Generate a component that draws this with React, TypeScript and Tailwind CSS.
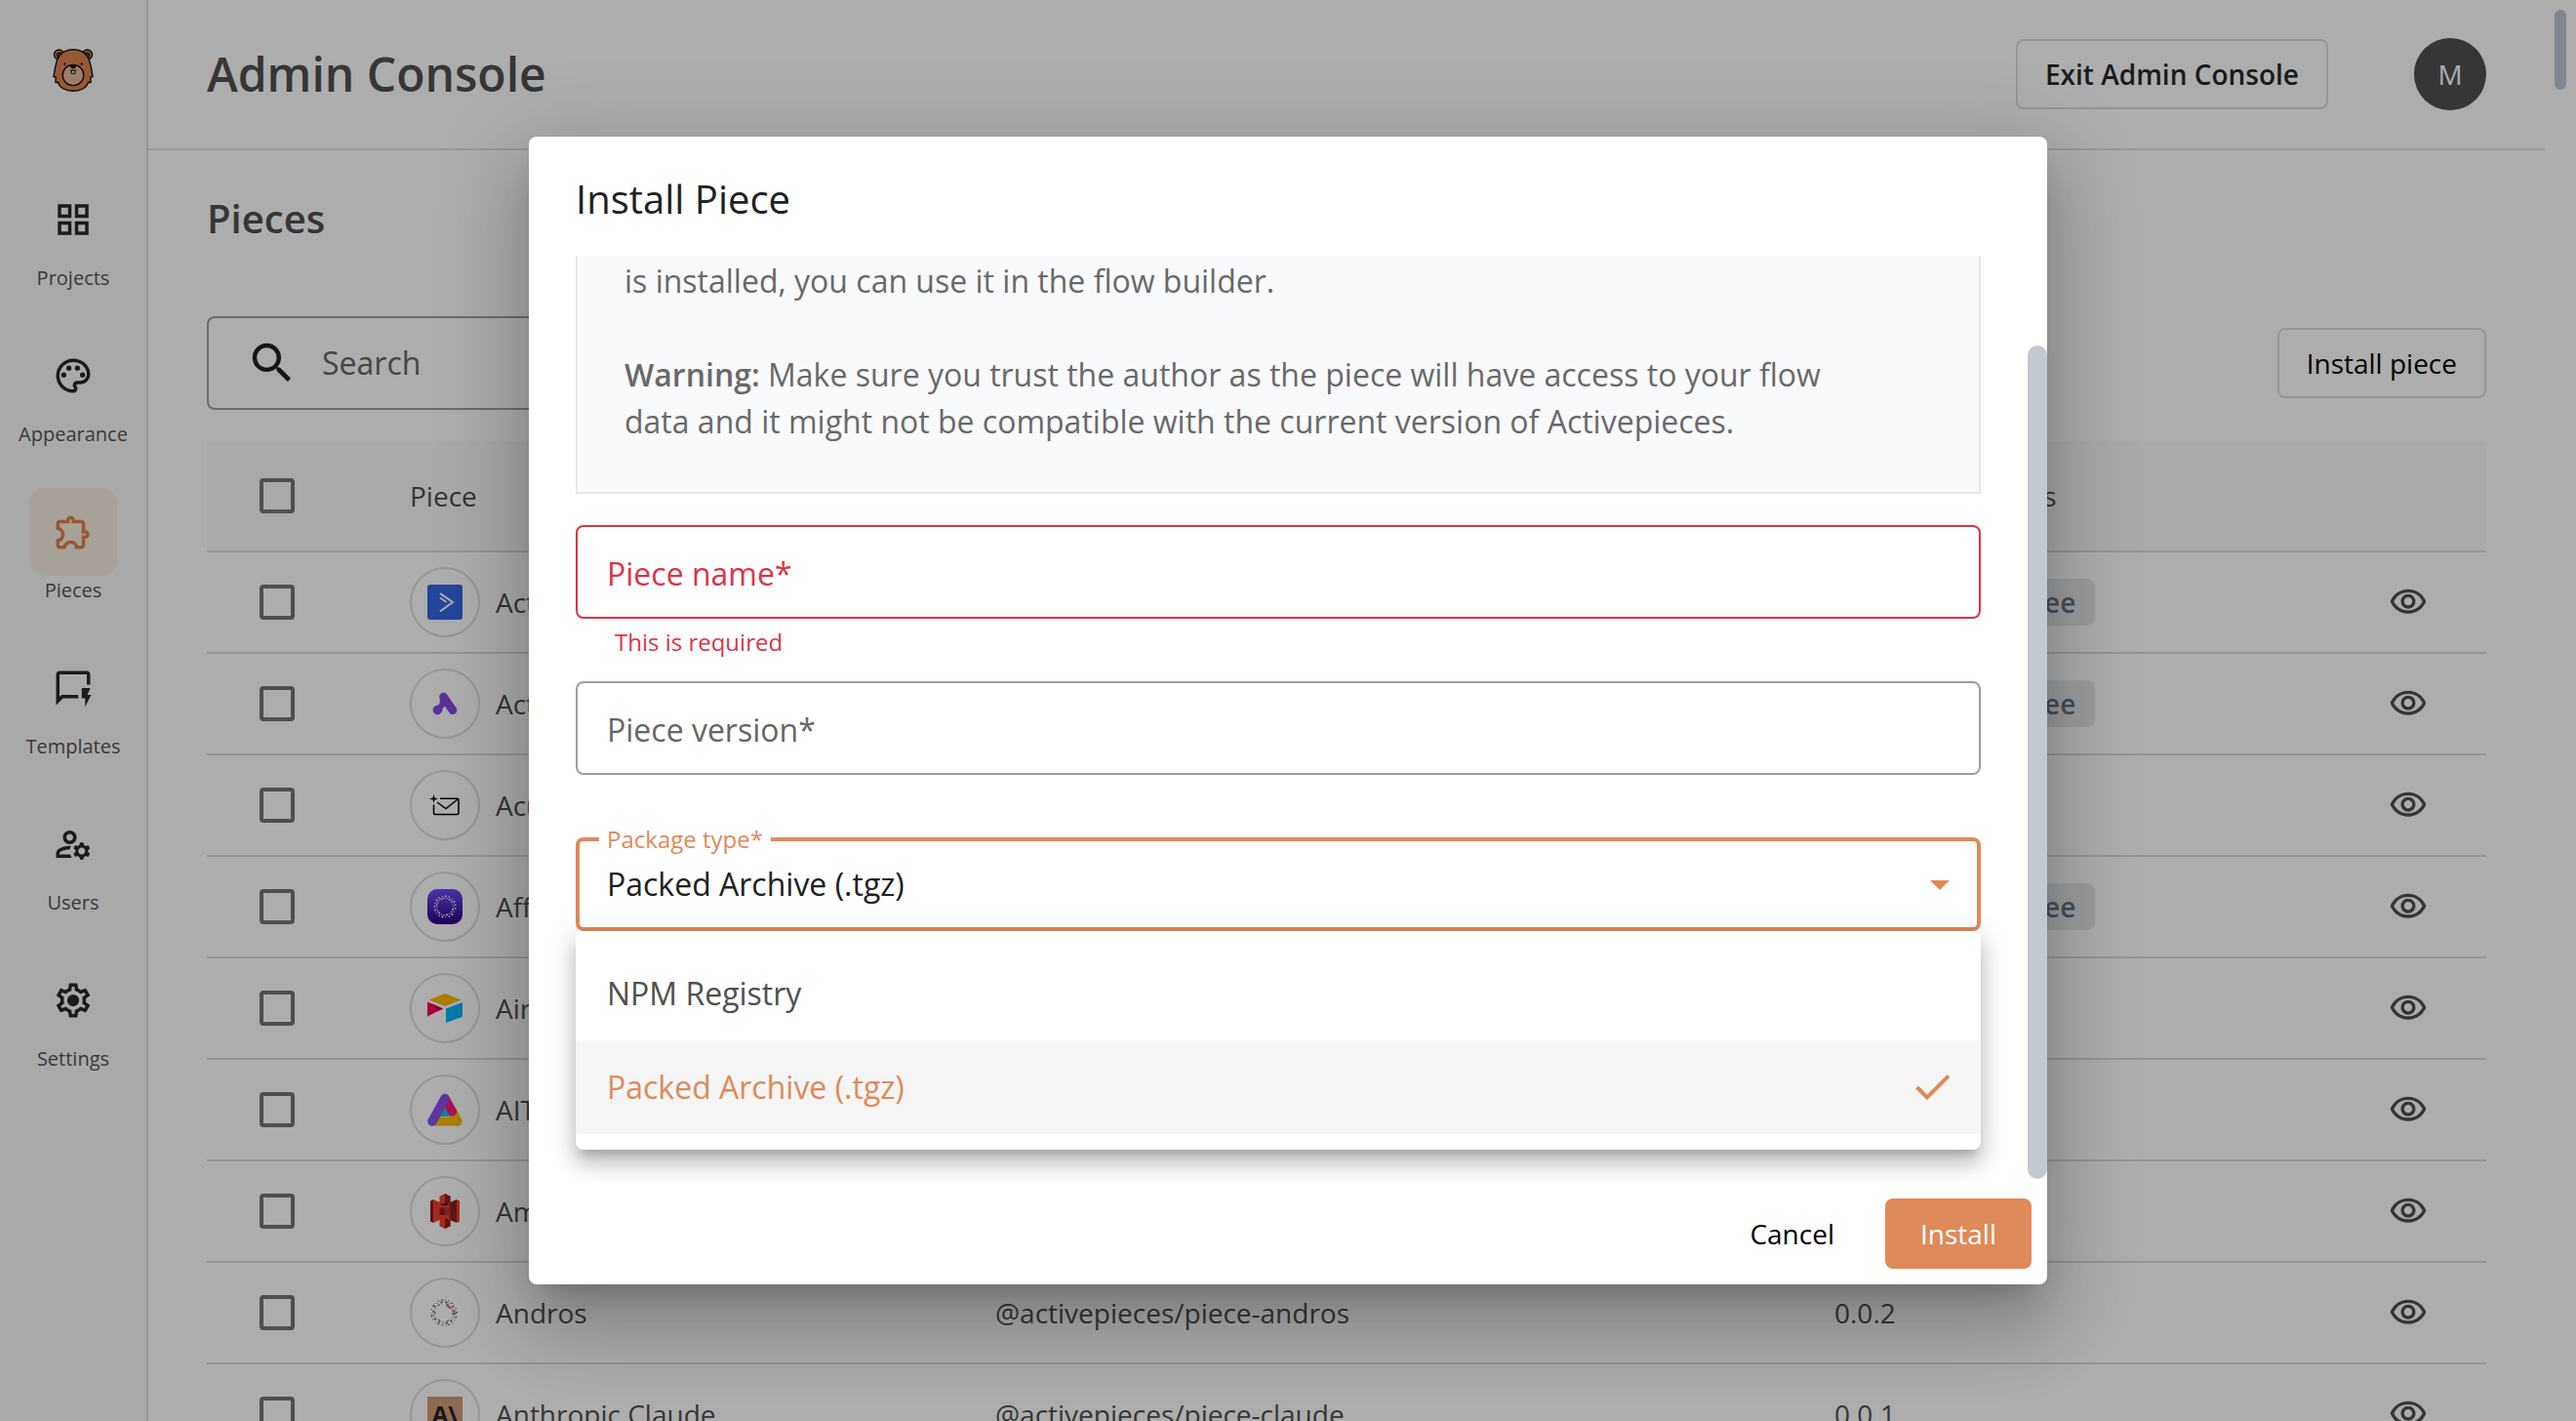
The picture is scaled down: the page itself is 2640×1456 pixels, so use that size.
import type { ReactNode } from "react";
import {
  MdOutlineExtension,
  MdOutlineGridView,
  MdOutlineManageAccounts,
  MdOutlinePalette,
  MdOutlineQuickreply,
  MdOutlineVisibility,
  MdSearch,
} from "react-icons/md";

function BearLogo() {
  return (
    <svg width="42" height="44" viewBox="0 0 42 44" aria-hidden="true">
      <g stroke="#111" strokeWidth="1.4" strokeLinejoin="round">
        <circle cx="6.5" cy="6" r="5" fill="#de8350" />
        <circle cx="35.5" cy="6" r="5" fill="#de8350" />
        <circle cx="7" cy="6.6" r="2.4" fill="#b5623a" />
        <circle cx="35" cy="6.6" r="2.4" fill="#b5623a" />
        <path
          d="M21 .8C12 .8 7 5.500 4.800 11C2.600 16.500 2 23 1 28.500L3.200 29L3 34.500L5.600 34.200C6.500 39.500 13 43.300 21 43.300C29 43.300 35.500 39.500 36.400 34.200L39 34.500L38.800 29L41 28.500C40 23 39.400 16.500 37.200 11C35 5.500 30 .8 21 .8Z"
          fill="#de8350"
        />
        <ellipse cx="21" cy="27" rx="10.800" ry="10.600" fill="#ebb79c" />
      </g>
      <ellipse cx="12.300" cy="15.600" rx=".9" ry="1.700" fill="#111" />
      <ellipse cx="29.700" cy="15.600" rx=".9" ry="1.700" fill="#111" />
      <circle cx="10.700" cy="18.700" r="1.300" fill="#f2818c" />
      <circle cx="31.300" cy="18.700" r="1.300" fill="#f2818c" />
      <path d="M17.600 17.600C18 16 24 16 24.400 17.600C24.300 19.200 22.300 20.400 21 20.400C19.700 20.400 17.700 19.200 17.600 17.600Z" fill="#111" />
      <path d="M18 21.500Q19.500 23 21 21.600Q22.500 23 24 21.500M19.300 22.500V25.300H22.700V22.500" fill="#fff" stroke="#111" strokeWidth="1.100" />
    </svg>
  );
}

function GearIcon() {
  return (
    <svg width="42" height="42" viewBox="0 0 24 24" fill="currentColor" aria-hidden="true">
      <path d="M19.430 12.980c.04-.32.07-.64.07-.98 0-.34-.03-.66-.07-.98l2.110-1.650c.19-.15.24-.42.12-.64l-2-3.460a.5.5 0 0 0-.61-.22l-2.490 1c-.52-.4-1.080-.73-1.690-.98l-.38-2.650A.488.488 0 0 0 14 2h-4c-.25 0-.46.18-.49.42l-.38 2.650c-.61.25-1.170.59-1.690.98l-2.490-1a.566.566 0 0 0-.18-.03c-.17 0-.34.09-.43.25l-2 3.460c-.13.22-.07.49.12.64l2.110 1.650c-.04.32-.07.65-.07.98 0 .33.03.66.07.98l-2.110 1.650c-.19.15-.24.42-.12.64l2 3.460a.5.5 0 0 0 .61.22l2.490-1c.52.4 1.080.73 1.690.98l.38 2.650c.03.24.24.42.49.42h4c.25 0 .46-.18.49-.42l.38-2.650c.61-.25 1.170-.59 1.690-.98l2.490 1c.06.02.12.03.18.03.17 0 .34-.09.43-.25l2-3.460c.12-.22.07-.49-.12-.64l-2.110-1.650zm-1.980-1.710c.04.31.05.52.05.73 0 .21-.02.43-.05.73l-.14 1.130.89.7 1.080.84-.7 1.210-1.270-.51-1.040-.42-.9.68c-.43.32-.84.56-1.250.73l-1.060.43-.16 1.130-.2 1.350h-1.400l-.19-1.350-.16-1.130-1.060-.43c-.43-.18-.83-.41-1.230-.71l-.91-.7-1.060.43-1.270.51-.7-1.210 1.080-.84.89-.7-.14-1.130c-.03-.31-.05-.54-.05-.74s.02-.43.05-.73l.14-1.130-.89-.7-1.080-.84.7-1.210 1.270.51 1.040.42.9-.68c.43-.32.84-.56 1.250-.73l1.060-.43.16-1.130.2-1.350h1.390l.19 1.350.16 1.130 1.060.43c.43.18.83.41 1.230.71l.91.7 1.060-.43 1.270-.51.7 1.210-1.070.85-.89.7.14 1.130z" />
      <circle cx="12" cy="12" r="3.500" />
    </svg>
  );
}

const dots = (count: number, radius: number, wobble: number) =>
  Array.from({ length: count }, (_, i) => {
    const angle = (i / count) * Math.PI * 2;
    const r = radius + (i % 2 ? wobble : -wobble);
    return { x: 18 + Math.cos(angle) * r, y: 18 + Math.sin(angle) * r, s: 0.7 + (i % 3) * 0.2 };
  });

const logos: Record<string, ReactNode> = {
  campaign: (
    <>
      <rect width="36" height="36" rx="3" fill="#3568e4" />
      <path d="M13 9L26 18L13 27.500M13 13.500L19.500 18" fill="none" stroke="#fff" strokeWidth="2" />
    </>
  ),
  actual: (
    <g fill="#8747e1" stroke="#8747e1">
      <path d="M16.500 11L26 24.700" strokeWidth="8.600" strokeLinecap="round" />
      <circle cx="10.300" cy="24.500" r="4.300" />
      <path d="M13 13.500C14 17 12.500 19.500 9.500 20.500L14.500 26C14.800 23.500 15.500 22 17.500 20.500L20 16Z" />
    </g>
  ),
  mail: (
    <>
      <g fill="none" stroke="#000" strokeWidth="1.500">
        <path d="M13 11.300H30.500Q32 11.300 32 12.800V26Q32 27.500 30.500 27.500H8Q6.500 27.500 6.500 26V17.500" />
        <path d="M10 15L19 21.500L31 12" />
      </g>
      <path d="M6.500 7L7.500 10.500L11 11.500L7.500 12.500L6.500 16L5.500 12.500L2 11.500L5.500 10.500Z" />
    </>
  ),
  ring: (
    <>
      <defs>
        <linearGradient id="ringFill" x1="0" x2="0" y1="0" y2="1">
          <stop offset="0" stopColor="#6d4ff7" />
          <stop offset="1" stopColor="#2a0080" />
        </linearGradient>
      </defs>
      <rect width="36" height="36" rx="10" fill="url(#ringFill)" />
      {dots(38, 9.7, 1.1).map((d, i) => (
        <circle key={i} cx={d.x} cy={d.y} r={d.s} fill="#e6dcff" />
      ))}
    </>
  ),
  blocks: (
    <>
      <path d="M1.700 9.500L18 3L34.500 9.500L18 16Z" fill="#fcb900" />
      <path d="M19 18.600L36 12V26.800L19 33Z" fill="#00b5fb" />
      <path d="M0 11.500L16 18.600L0 26.400Z" fill="#fe0052" />
      <path d="M4 13.300L16 18.600L12 20.500Z" fill="#ba003c" />
    </>
  ),
  triangle: (
    <>
      <path d="M8 30H31" stroke="#ffbb00" strokeWidth="9" strokeLinecap="round" />
      <path d="M26 20L31 30" stroke="#ffbb00" strokeWidth="9" strokeLinecap="round" />
      <path d="M18 16L12 25H25Z" fill="#00cbdc" />
      <path d="M19 8L25.500 20" stroke="#fe1879" strokeWidth="9" strokeLinecap="round" />
      <path d="M18 6.500L5 30" stroke="#8a51f2" strokeWidth="9.500" strokeLinecap="round" />
    </>
  ),
  bucket: (
    <>
      <path d="M3 7.500L6 6V30L3 28.500Z" fill="#8c2123" />
      <path d="M6 6L13 9V27L6 30Z" fill="#f0402f" />
      <path d="M33 7.500L30 6V30L33 28.500Z" fill="#f0402f" />
      <path d="M30 6L23 9V27L30 30Z" fill="#8c2123" />
      <path d="M13 9H23V27H13Z" fill="#f0402f" />
      <path d="M18 0L23.500 2.800V9L18 11L12.500 9V2.800Z" fill="#f0402f" />
      <path d="M18 0L23.500 2.800V9L18 11Z" fill="#8c2123" />
      <path d="M12.500 11L18 10L23.500 11L18 12.500Z" fill="#5c1213" />
      <path d="M12.500 14.500H18V22H12.500Z" fill="#8c2123" />
      <path d="M18 14.500H23.500V22H18Z" fill="#c0332b" />
      <path d="M12.500 27L18 25L23.500 27V33.200L18 36L12.500 33.200Z" fill="#f0402f" />
      <path d="M18 25L23.500 27V33.200L18 36Z" fill="#8c2123" />
    </>
  ),
  swirl: (
    <g fill="none" stroke="#39435f">
      <circle cx="17" cy="18" r="13" strokeWidth="1.100" strokeDasharray="1 2.500 2 1.800 .6 3" />
      <circle cx="17" cy="18" r="11" strokeWidth="1.300" strokeDasharray="2.200 2.400 .8 2.800 2 3" />
      <circle cx="17" cy="18" r="9.300" strokeWidth=".9" strokeDasharray="3 2.500 .6 3" />
      <path d="M20 10.500L24.500 14" stroke="#f0503c" strokeWidth="2" />
    </g>
  ),
};

type Piece = { name: string; pkg: string; version: string; free?: boolean; logo: string };

const pieces: Piece[] = [
  { name: "ActiveCampaign", pkg: "@activepieces/piece-activecampaign", version: "0.0.3", free: true, logo: "campaign" },
  { name: "Actual Budget", pkg: "@activepieces/piece-actualbudget", version: "0.0.1", free: true, logo: "actual" },
  { name: "Acumbamail", pkg: "@activepieces/piece-acumbamail", version: "0.0.3", logo: "mail" },
  { name: "Afforai", pkg: "@activepieces/piece-afforai", version: "0.0.1", free: true, logo: "ring" },
  { name: "Airtable", pkg: "@activepieces/piece-airtable", version: "0.4.3", logo: "blocks" },
  { name: "AITable", pkg: "@activepieces/piece-aitable", version: "0.0.2", logo: "triangle" },
  { name: "Amazon S3", pkg: "@activepieces/piece-amazon-s3", version: "0.2.3", logo: "bucket" },
  { name: "Andros", pkg: "@activepieces/piece-andros", version: "0.0.2", logo: "swirl" },
  { name: "Anthropic Claude", pkg: "@activepieces/piece-claude", version: "0.0.1", logo: "claude" },
];

const navItems = [
  { label: "Projects", icon: <MdOutlineGridView size={42} /> },
  { label: "Appearance", icon: <MdOutlinePalette size={42} /> },
  { label: "Pieces", icon: <MdOutlineExtension size={42} />, active: true },
  { label: "Templates", icon: <MdOutlineQuickreply size={42} /> },
  { label: "Users", icon: <MdOutlineManageAccounts size={42} /> },
  { label: "Settings", icon: <GearIcon /> },
];

function Sidebar() {
  return (
    <nav className="flex w-[152px] shrink-0 flex-col items-center border-r-2 border-[#dcdcdc] bg-[#fafafa] pt-[50px]">
      <a href="#home" aria-label="Home" className="mb-[86px]">
        <BearLogo />
      </a>
      <ul className="flex flex-col gap-10">
        {navItems.map((item) => (
          <li key={item.label}>
            <a href={"#" + item.label.toLowerCase()} className="flex flex-col items-center">
              <span
                className={
                  item.active
                    ? "flex size-[90px] items-center justify-center rounded-2xl bg-[#f7eee2] text-[#de8350]"
                    : "flex size-[90px] items-center justify-center text-[#282828]"
                }
              >
                {item.icon}
              </span>
              <span className="text-[20px] leading-[30px] text-[#555]">{item.label}</span>
            </a>
          </li>
        ))}
      </ul>
    </nav>
  );
}

function Tick({ label }: { label: string }) {
  return (
    <input
      type="checkbox"
      aria-label={label}
      className="ml-[54px] block size-9 appearance-none rounded border-4 border-[#757575]"
    />
  );
}

function PieceTable() {
  return (
    <table className="mt-8 w-full table-fixed border-separate border-spacing-0 text-left text-[28px] text-[#505050] [&_td]:border-b-2 [&_td]:border-[#dcdcdc] [&_td]:p-0 [&_th]:border-b-2 [&_th]:border-[#dcdcdc] [&_th]:p-0">
      <colgroup>
        <col className="w-[208px]" />
        <col className="w-[600px]" />
        <col />
        <col className="w-[168px]" />
        <col className="w-[300px]" />
        <col className="w-[200px]" />
      </colgroup>
      <thead>
        <tr className="h-[114px] bg-[#fafafa]">
          <th><Tick label="Select all pieces" /></th>
          <th className="font-normal">Piece</th>
          <th className="font-normal">Package name</th>
          <th className="font-normal">Version</th>
          <th className="font-normal">Tags</th>
          <th aria-label="Actions" />
        </tr>
      </thead>
      <tbody>
        {pieces.map((p) => (
          <tr key={p.name} className="h-[104px]">
            <td><Tick label={"Select " + p.name} /></td>
            <td>
              <div className="flex items-center gap-4">
                <span className="flex size-[72px] shrink-0 items-center justify-center rounded-full border-2 border-[#dcdcdc]">
                  {p.logo === "claude" ? (
                    <span className="flex size-9 items-center justify-center bg-[#d19c76] text-[24px] leading-none font-bold text-[#222]">
                      A\
                    </span>
                  ) : (
                    <svg width="36" height="36" viewBox="0 0 36 36" aria-hidden="true">{logos[p.logo]}</svg>
                  )}
                </span>
                {p.name}
              </div>
            </td>
            <td>{p.pkg}</td>
            <td>{p.version}</td>
            <td>
              {p.free && (
                <span className="inline-flex h-12 items-center rounded-lg bg-[#e5e7eb] px-5 align-middle text-[28px] font-semibold text-[#6b7280]">
                  Free
                </span>
              )}
            </td>
            <td>
              <button type="button" aria-label={"Toggle visibility of " + p.name} className="mr-[60px] ml-auto block">
                <MdOutlineVisibility size={40} />
              </button>
            </td>
          </tr>
        ))}
      </tbody>
    </table>
  );
}

function InstallDialog() {
  return (
    <div className="absolute inset-0 flex items-center justify-center bg-black/32">
      <section
        role="dialog"
        aria-modal="true"
        aria-labelledby="dialog-title"
        className="w-[1556px] rounded-lg bg-white shadow-[0_22px_30px_-14px_rgba(0,0,0,0.2),0_48px_76px_6px_rgba(0,0,0,0.14),0_18px_92px_16px_rgba(0,0,0,0.12)]"
      >
        <h2 id="dialog-title" className="px-12 pt-8 pb-[26px] text-[40px] leading-16 text-[#212121]">
          Install Piece
        </h2>
        <div className="flex">
          <div className="flex-1 pr-[68px] pb-[254px] pl-12">
            <div className="border-x-2 border-b-2 border-[#e5e7eb] bg-[#f9fafc] px-12 pt-0.5 pb-12 text-[32px] leading-12 text-[#696969]">
              <p>is installed, you can use it in the flow builder.</p>
              <p className="mt-12">
                <strong className="font-semibold">Warning:</strong> Make sure you trust the author as the piece will have access
                to your flow
                <br />
                data and it might not be compatible with the current version of Activepieces.
              </p>
            </div>

            <form className="mt-8 text-[32px]">
              <div className="relative">
                <label htmlFor="piece-name" className="pointer-events-none absolute top-1 bottom-0 left-8 flex items-center text-[#dc3545]">
                  Piece name*
                </label>
                <input id="piece-name" aria-invalid="true" aria-describedby="piece-name-error" className="block h-24 w-full rounded-lg border-2 border-[#dc3545] px-8" />
              </div>
              <p id="piece-name-error" className="h-16 pt-1.5 pl-10 text-[24px] leading-9 text-[#dc3545]">
                This is required
              </p>
              <div className="relative">
                <label htmlFor="piece-version" className="pointer-events-none absolute top-1 bottom-0 left-8 flex items-center text-[#666]">
                  Piece version*
                </label>
                <input id="piece-version" className="block h-24 w-full rounded-lg border-2 border-[#9e9e9e] px-8" />
              </div>
              <div className="relative mt-16">
                <label htmlFor="package-type" className="absolute -top-4 left-6 bg-white px-2 text-[24px] leading-9 text-[#de8a5a]">
                  Package type*
                </label>
                <select
                  id="package-type"
                  defaultValue="archive"
                  className="block h-24 w-full appearance-none rounded-lg border-4 border-[#de8a5a] px-7 text-[#212121]"
                >
                  <option value="npm">NPM Registry</option>
                  <option value="archive">Packed Archive (.tgz)</option>
                </select>
                <svg className="pointer-events-none absolute top-11 right-8" width="20" height="10" viewBox="0 0 20 10" fill="#de8a5a" aria-hidden="true">
                  <path d="M0 0H20L10 10Z" />
                </svg>
                <ul
                  role="listbox"
                  aria-label="Package type"
                  className="absolute inset-x-0 top-full rounded-b-lg bg-white py-4 shadow-[0_10px_10px_-6px_rgba(0,0,0,0.2),0_16px_20px_2px_rgba(0,0,0,0.14),0_6px_28px_4px_rgba(0,0,0,0.12)]"
                >
                  <li role="option" aria-selected="false" className="flex h-24 items-center px-8 text-[#505050]">
                    NPM Registry
                  </li>
                  <li role="option" aria-selected="true" className="flex h-24 items-center justify-between bg-[#f5f5f5] px-8 text-[#de8a5a]">
                    Packed Archive (.tgz)
                    <svg width="36" height="28" viewBox="0 0 36 28" fill="none" stroke="#de8a5a" strokeWidth="4" aria-hidden="true">
                      <path d="M2.500 14L13 24.500L35 2.500" />
                    </svg>
                  </li>
                </ul>
              </div>
            </form>
          </div>
          <div className="-ml-5 w-5 pt-[92px]">
            <div className="h-full rounded-full bg-[#c2c9d1]" />
          </div>
        </div>
        <div className="flex justify-end gap-4 px-4 pt-5 pb-4 text-[28px]">
          <button type="button" className="h-[72px] rounded-lg px-9 font-medium text-black">Cancel</button>
          <button type="button" className="h-[72px] rounded-lg bg-[#de8a5a] px-9 font-medium text-white">Install</button>
        </div>
      </section>
    </div>
  );
}

export default function App() {
  return (
    <div className="relative flex h-screen overflow-hidden bg-white font-['Open_Sans',sans-serif] text-[#505050]">
      <Sidebar />
      <div className="flex min-w-0 flex-1 flex-col">
        <header className="flex h-[154px] shrink-0 items-center border-b-2 border-[#e0e0e0] px-[60px]">
          <h1 className="flex-1 text-[48px] font-semibold">Admin Console</h1>
          <button type="button" className="mr-[88px] h-[72px] rounded-lg border-2 border-[#dcdcdc] px-7 text-[28px] font-semibold text-[#282828]">
            Exit Admin Console
          </button>
          <button type="button" aria-label="Account" className="size-[74px] rounded-full bg-[#505050] text-[28px] text-white">
            M
          </button>
        </header>
        <main className="px-[60px] pt-10">
          <h2 className="text-[40px] leading-[60px] font-semibold">Pieces</h2>
          <div className="mt-[70px] flex items-center justify-between">
            <label className="flex h-24 w-[700px] items-center rounded-lg border-2 border-[#9e9e9e] pl-[38px] text-[32px]">
              <MdSearch size={54} className="text-[#212121]" />
              <input type="search" aria-label="Search pieces" placeholder="Search" className="ml-6 min-w-0 flex-1 placeholder:text-[#666]" />
            </label>
            <button type="button" className="h-[72px] rounded-lg border-2 border-[#dcdcdc] px-7 text-[28px] font-medium text-black">
              Install piece
            </button>
          </div>
          <PieceTable />
        </main>
      </div>
      <div className="w-8 shrink-0 px-2.5 pt-2.5">
        <div className="h-[82px] rounded-full bg-[#c0c6d2]" />
      </div>
      <InstallDialog />
    </div>
  );
}
